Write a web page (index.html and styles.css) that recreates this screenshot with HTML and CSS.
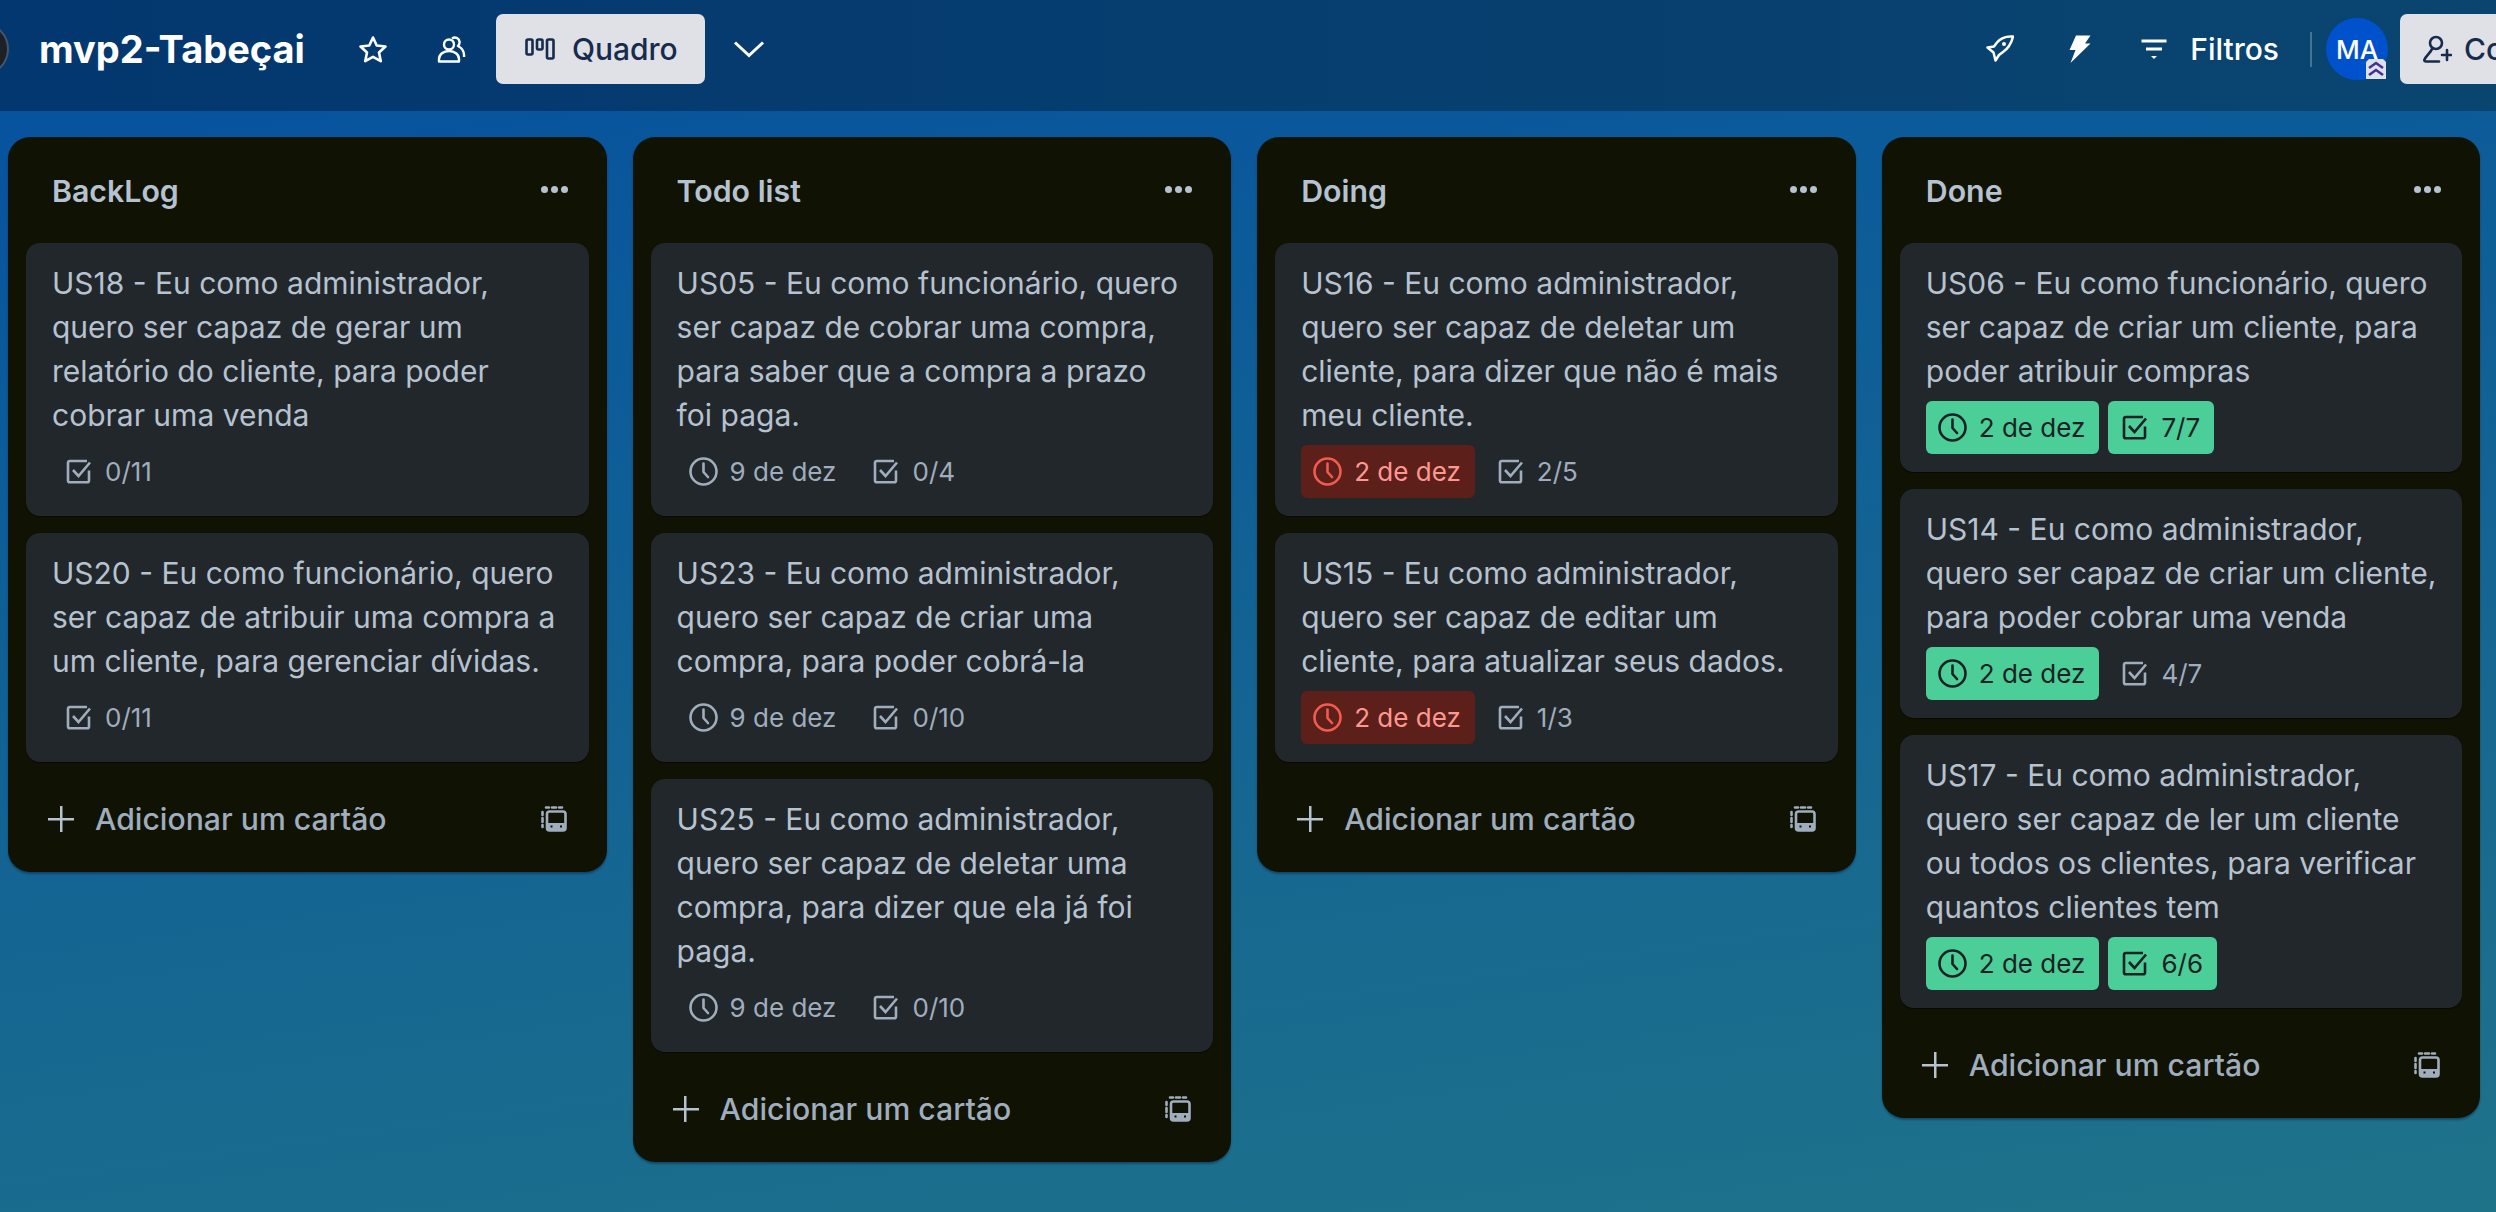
FILE: index.html
```html
<!DOCTYPE html>
<html lang="pt-BR">
<head>
    <meta charset="UTF-8">
    <title>mvp2-Tabeçai</title>
    <link rel="stylesheet" href="styles.css">
</head>
<body>
    <svg class="sprite" xmlns="http://www.w3.org/2000/svg">
        <symbol id="i-clock" viewBox="0 0 29 29">
            <circle cx="14.5" cy="14.5" r="13" fill="none" stroke="currentColor" stroke-width="2.6"/>
            <path d="M14.5 6.5v8.5l4.5 5" fill="none" stroke="currentColor" stroke-width="2.6" stroke-linecap="round" stroke-linejoin="round"/>
        </symbol>
        <symbol id="i-check" viewBox="0 0 25 25">
            <path d="M23 11.5v10a1.8 1.8 0 0 1-1.8 1.8H3.8A1.8 1.8 0 0 1 2 21.500V3.800A1.800 1.800 0 0 1 3.800 2H21" fill="none" stroke="currentColor" stroke-width="2.600"/>
            <path d="M7 11l5.500 6L24 3.500" fill="none" stroke="currentColor" stroke-width="2.600"/>
        </symbol>
        <symbol id="i-template" viewBox="0 0 26 26">
            <path d="M5 1.500h3M11 1.500h4M18 1.500h3M1.500 6v3M1.500 12v4M1.500 19v2" fill="none" stroke="currentColor" stroke-width="2.600" stroke-linecap="round"/>
            <rect x="6" y="5.500" width="18.500" height="19" rx="2.500" fill="none" stroke="currentColor" stroke-width="2.600"/>
            <path d="M6 17h18.500v5a2.500 2.500 0 0 1-2.500 2.500H8.500A2.500 2.500 0 0 1 6 22z" fill="currentColor"/>
            <path d="M9.500 20.500h2M19 20.500h2" stroke="#101204" stroke-width="2"/>
        </symbol>
    </svg>

    <header class="topbar">
        <div class="board-logo"></div>
        <h1 class="board-name">mvp2-Tabeçai</h1>
        <button class="icon-btn star-btn">
            <svg width="30" height="29" viewBox="0 0 30 29"><path d="M15 2.500l3.700 8 8.800 1-6.500 6 1.800 8.700L15 21.800l-7.800 4.400L9 17.500l-6.500-6 8.800-1z" fill="none" stroke="#fff" stroke-width="2.600" stroke-linejoin="round"/></svg>
        </button>
        <button class="icon-btn people-btn">
            <svg width="30" height="27" viewBox="0 0 30 27"><g fill="none" stroke="#fff" stroke-width="2.400" stroke-linejoin="round"><circle cx="12" cy="8.500" r="5"/><path d="M2 25.500v-2.500c0-4.500 4.500-8 10-8s10 3.500 10 8v2.500z"/><path d="M15 2.500c3-2 7-.5 7.500 3 .3 2-.5 3.500-1.500 4.500 4 2 6.500 6 6 11"/></g></svg>
        </button>
        <button class="view-btn">
            <svg width="30" height="22" viewBox="0 0 30 22"><g fill="none" stroke="currentColor" stroke-width="2.600"><rect x="1.500" y="1.500" width="6" height="15" rx="1.500"/><rect x="12" y="1.500" width="5.500" height="10" rx="1.500"/><rect x="22" y="1.500" width="6.500" height="19" rx="1.500"/></g></svg>
            Quadro
        </button>
        <button class="icon-btn chevron-btn">
            <svg width="32" height="18" viewBox="0 0 32 18"><path d="M2 2.500l14 13 14-13" fill="none" stroke="#fff" stroke-width="3"/></svg>
        </button>

        <div class="topbar-right">
            <button class="icon-btn">
                <svg width="28" height="28" viewBox="0 0 28 28"><g fill="none" stroke="#fff" stroke-width="2.500" stroke-linejoin="round"><path d="M27 1.500c-7-.5-12.500 1.500-16 6l-3 4-6.500 1 6 5 2 8 3.500-5.500 4-3c5-3.500 8.500-9 10-15.500z"/></g><circle cx="18" cy="9" r="2" fill="#fff"/></svg>
            </button>
            <button class="icon-btn">
                <svg width="22" height="28" viewBox="0 0 22 28"><path d="M7 0.500h14.500l-5.500 8h5.500L1.500 28l5-13H0.500z" fill="#fff"/></svg>
            </button>
            <button class="filter-btn">
                <svg width="26" height="20" viewBox="0 0 26 20"><path d="M0.500 2h25M5 10h16" stroke="#fff" stroke-width="3"/><path d="M10 17h6l-3 3z" fill="#fff"/></svg>
                Filtros
            </button>
            <span class="divider"></span>
            <div class="avatar">MA
                <svg class="avatar-badge" width="20" height="20" viewBox="0 0 20 20"><path d="M0 3l3-3h14l3 3v17H0z" fill="#dfe1e6"/><path d="M3 9l7-5 7 5M3 16l7-5 7 5" fill="none" stroke="#403294" stroke-width="2.500"/></svg>
            </div>
            <button class="share-btn">
                <svg width="30" height="28" viewBox="0 0 30 28"><g fill="none" stroke="currentColor" stroke-width="2.600" stroke-linecap="round"><circle cx="14" cy="8" r="6"/><path d="M10 14c-1 3-6 7-7.500 10.500-.5 1.500.5 2 1.500 2h13M25 15v10M20 20h9"/></g></svg>
                Compartilhar
            </button>
        </div>
    </header>

    <main class="board">
        <section class="list">
            <h2 class="list-title">BackLog <span class="dots"><i></i><i></i><i></i></span></h2>
            <div class="cards">
                <article class="card">
                    <p>US18 - Eu como administrador, quero ser capaz de gerar um relatório do cliente, para poder cobrar uma venda</p>
                    <div class="badges">
                        <span class="badge"><svg class="check"><use href="#i-check"/></svg>0/11</span>
                    </div>
                </article>
                <article class="card">
                    <p>US20 - Eu como funcionário, quero ser capaz de atribuir uma compra a um cliente, para gerenciar dívidas.</p>
                    <div class="badges">
                        <span class="badge"><svg class="check"><use href="#i-check"/></svg>0/11</span>
                    </div>
                </article>
            </div>
            <footer class="list-footer">
                <span class="plus"></span>
                <span class="add-label">Adicionar um cartão</span>
                <svg class="template"><use href="#i-template"/></svg>
            </footer>
        </section>

        <section class="list">
            <h2 class="list-title">Todo list <span class="dots"><i></i><i></i><i></i></span></h2>
            <div class="cards">
                <article class="card">
                    <p>US05 - Eu como funcionário, quero ser capaz de cobrar uma compra, para saber que a compra a prazo foi paga.</p>
                    <div class="badges">
                        <span class="badge"><svg class="clock"><use href="#i-clock"/></svg>9 de dez</span>
                        <span class="badge"><svg class="check"><use href="#i-check"/></svg>0/4</span>
                    </div>
                </article>
                <article class="card">
                    <p>US23 - Eu como administrador, quero ser capaz de criar uma compra, para poder cobrá-la</p>
                    <div class="badges">
                        <span class="badge"><svg class="clock"><use href="#i-clock"/></svg>9 de dez</span>
                        <span class="badge"><svg class="check"><use href="#i-check"/></svg>0/10</span>
                    </div>
                </article>
                <article class="card">
                    <p>US25 - Eu como administrador, quero ser capaz de deletar uma compra, para dizer que ela já foi paga.</p>
                    <div class="badges">
                        <span class="badge"><svg class="clock"><use href="#i-clock"/></svg>9 de dez</span>
                        <span class="badge"><svg class="check"><use href="#i-check"/></svg>0/10</span>
                    </div>
                </article>
            </div>
            <footer class="list-footer">
                <span class="plus"></span>
                <span class="add-label">Adicionar um cartão</span>
                <svg class="template"><use href="#i-template"/></svg>
            </footer>
        </section>

        <section class="list">
            <h2 class="list-title">Doing <span class="dots"><i></i><i></i><i></i></span></h2>
            <div class="cards">
                <article class="card">
                    <p>US16 - Eu como administrador, quero ser capaz de deletar um cliente, para dizer que não é mais meu cliente.</p>
                    <div class="badges">
                        <span class="badge late"><svg class="clock"><use href="#i-clock"/></svg>2 de dez</span>
                        <span class="badge"><svg class="check"><use href="#i-check"/></svg>2/5</span>
                    </div>
                </article>
                <article class="card">
                    <p>US15 - Eu como administrador, quero ser capaz de editar um cliente, para atualizar seus dados.</p>
                    <div class="badges">
                        <span class="badge late"><svg class="clock"><use href="#i-clock"/></svg>2 de dez</span>
                        <span class="badge"><svg class="check"><use href="#i-check"/></svg>1/3</span>
                    </div>
                </article>
            </div>
            <footer class="list-footer">
                <span class="plus"></span>
                <span class="add-label">Adicionar um cartão</span>
                <svg class="template"><use href="#i-template"/></svg>
            </footer>
        </section>

        <section class="list">
            <h2 class="list-title">Done <span class="dots"><i></i><i></i><i></i></span></h2>
            <div class="cards">
                <article class="card">
                    <p>US06 - Eu como funcionário, quero ser capaz de criar um cliente, para poder atribuir compras</p>
                    <div class="badges">
                        <span class="badge done"><svg class="clock"><use href="#i-clock"/></svg>2 de dez</span>
                        <span class="badge done"><svg class="check"><use href="#i-check"/></svg>7/7</span>
                    </div>
                </article>
                <article class="card">
                    <p>US14 - Eu como administrador, quero ser capaz de criar um cliente, para poder cobrar uma venda</p>
                    <div class="badges">
                        <span class="badge done"><svg class="clock"><use href="#i-clock"/></svg>2 de dez</span>
                        <span class="badge"><svg class="check"><use href="#i-check"/></svg>4/7</span>
                    </div>
                </article>
                <article class="card">
                    <p>US17 - Eu como administrador, quero ser capaz de ler um cliente ou todos os clientes, para verificar quantos clientes tem</p>
                    <div class="badges">
                        <span class="badge done"><svg class="clock"><use href="#i-clock"/></svg>2 de dez</span>
                        <span class="badge done"><svg class="check"><use href="#i-check"/></svg>6/6</span>
                    </div>
                </article>
            </div>
            <footer class="list-footer">
                <span class="plus"></span>
                <span class="add-label">Adicionar um cartão</span>
                <svg class="template"><use href="#i-template"/></svg>
            </footer>
        </section>
    </main>
</body>
</html>
```

FILE: styles.css
```css
* {
    box-sizing: border-box;
}
html, body {
    height: 100%;
}
body {
    margin: 0;
    overflow: hidden;
    font-family: Inter, "Noto Sans", sans-serif;
    background: linear-gradient(172deg, #064f9f 0%, #0b5a9a 25%, #1f7389 100%);
}
button {
    font-family: inherit;
    border: none;
    background: none;
    padding: 0;
}
.sprite {
    display: none;
}
.topbar {
    height: 111px;
    padding-bottom: 13px;
    display: flex;
    align-items: center;
    background: linear-gradient(90deg, #03376f 0%, #0a4570 100%);
    color: #fff;
}
.board-logo {
    width: 54px;
    height: 54px;
    margin-left: -45px;
    border-radius: 50%;
    background: #1d2125;
    border: 2px solid #44546f;
    flex-shrink: 0;
}
.board-name {
    margin: 0 0 0 30px;
    font-size: 38px;
    font-weight: 700;
    white-space: nowrap;
}
.icon-btn {
    display: flex;
    align-items: center;
    justify-content: center;
}
.star-btn {
    margin-left: 53px;
}
.people-btn {
    margin-left: 49px;
}
.view-btn {
    display: flex;
    align-items: center;
    gap: 17px;
    height: 70px;
    width: 209px;
    margin-left: 29px;
    padding-left: 29px;
    border-radius: 7px;
    background: #dfe1e6;
    color: #172b4d;
    font-size: 30px;
    font-weight: 500;
}
.chevron-btn {
    margin-left: 28px;
}
.topbar-right {
    display: flex;
    align-items: center;
    margin-left: auto;
}
.topbar-right .icon-btn + .icon-btn {
    margin-left: 55px;
}
.filter-btn {
    display: flex;
    align-items: center;
    gap: 23px;
    margin-left: 50px;
    color: #fff;
    font-size: 30px;
    font-weight: 500;
}
.divider {
    width: 2px;
    height: 35px;
    margin: 0 14px 0 31px;
    background: rgba(255, 255, 255, 0.25);
}
.avatar {
    position: relative;
    display: flex;
    align-items: center;
    justify-content: center;
    width: 62px;
    height: 62px;
    border-radius: 50%;
    background: #0052cc;
    color: #fff;
    font-size: 26px;
    font-weight: 500;
}
.avatar-badge {
    position: absolute;
    right: 2px;
    bottom: 1px;
}
.share-btn {
    display: flex;
    align-items: center;
    gap: 12px;
    width: 260px;
    height: 70px;
    margin-left: 12px;
    margin-right: -164px;
    padding-left: 22px;
    flex-shrink: 0;
    border-radius: 7px;
    background: #dfe1e6;
    color: #172b4d;
    font-size: 30px;
    font-weight: 500;
    white-space: nowrap;
}
.board {
    display: flex;
    align-items: flex-start;
    gap: 26px;
    padding: 26px 0 0 8px;
}
.list {
    width: 598.6px;
    flex-shrink: 0;
    border-radius: 22px;
    background: #101204;
    box-shadow: 0 2px 2px rgba(9, 30, 66, 0.45);
}
.list-title {
    display: flex;
    align-items: center;
    justify-content: space-between;
    height: 106px;
    margin: 0;
    padding: 2px 39px 0 44px;
    color: #b6c2cf;
    font-size: 30.3px;
    font-weight: 600;
}
.dots {
    display: flex;
    gap: 3px;
    margin-top: -4px;
}
.dots i {
    width: 7px;
    height: 7px;
    border-radius: 50%;
    background: #b6c2cf;
}
.cards {
    display: flex;
    flex-direction: column;
    gap: 17px;
    padding: 0 18px;
}
.card {
    padding: 18px 24px 18px 26px;
    border-radius: 14px;
    background: #22272b;
    box-shadow: 0 1px 1px rgba(0, 0, 0, 0.5);
    color: #b6c2cf;
}
.card p {
    margin: 0 0 8px;
    font-size: 30px;
    line-height: 44px;
}
.badges {
    display: flex;
    gap: 9px;
}
.badge {
    display: flex;
    align-items: center;
    height: 53px;
    padding: 0 14px;
    border-radius: 6px;
    color: #9fadbc;
    font-size: 26px;
}
.badge .clock {
    width: 29px;
    height: 29px;
    margin: 0 12px 0 -2px;
}
.badge .check {
    width: 25px;
    height: 25px;
    margin-right: 14px;
}
.badge.late {
    background: #5d1f1a;
    color: #fd9891;
}
.badge.late .clock {
    color: #f15b50;
}
.badge.done {
    background: #4bce97;
    color: #1d2125;
}
.list-footer {
    display: flex;
    align-items: center;
    height: 110px;
    padding: 4px 40px 0 40px;
    color: #9fadbc;
}
.plus {
    width: 26px;
    height: 26px;
    flex-shrink: 0;
    background:
        linear-gradient(#b6c2cf, #b6c2cf) center / 100% 2.5px no-repeat,
        linear-gradient(#b6c2cf, #b6c2cf) center / 2.5px 100% no-repeat;
}
.add-label {
    flex: 1;
    margin-left: 21px;
    font-size: 30.2px;
    font-weight: 500;
}
.template {
    width: 26px;
    height: 26px;
}
```
